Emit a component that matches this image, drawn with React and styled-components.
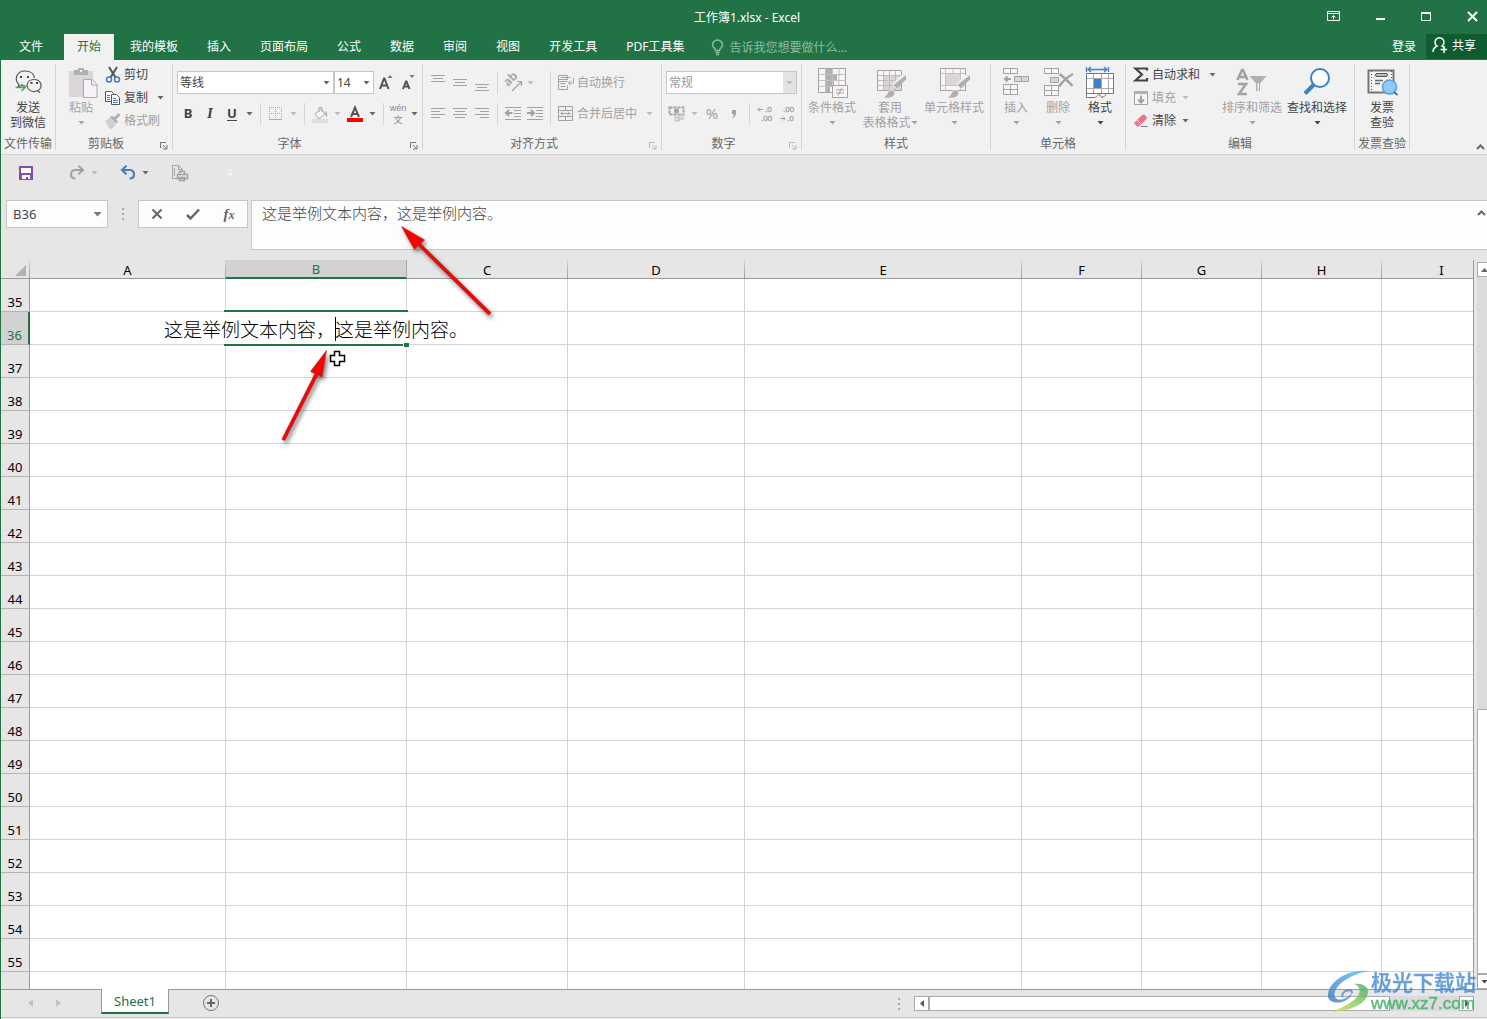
import React from 'react';
import styled, { createGlobalStyle, css } from 'styled-components'

const green = '#217346'
const uiFont = '"Noto Sans", "Noto Sans CJK SC", sans-serif'

const columns = [
    { name: 'A', width: 196 },
    { name: 'B', width: 181 },
    { name: 'C', width: 161 },
    { name: 'D', width: 177 },
    { name: 'E', width: 277 },
    { name: 'F', width: 120 },
    { name: 'G', width: 120 },
    { name: 'H', width: 120 },
    { name: 'I', width: 120 },
]
const rows = Array.from({ length: 21 }, (_, i) => 35 + i)
const tabs = ['我的模板', '插入', '页面布局', '公式', '数据', '审阅', '视图', '开发工具', 'PDF工具集']
const content = '这是举例文本内容，这是举例内容。'

const GlobalStyle = createGlobalStyle`
  * { box-sizing: border-box; }
  body {
    margin: 0;
    overflow: hidden;
    background: #e6e6e6;
    color: #444;
    font: 12px/15px ${uiFont};
  }
  button, input, select, textarea {
    margin: 0;
    padding: 0;
    border: 0;
    border-radius: 0;
    outline: 0;
    background: none;
    color: inherit;
    font: inherit;
  }
  svg { display: block; flex: none; overflow: visible; }
`;

/* ---------- icons ---------- */

const Down = () => (
    <svg width="7" height="4" viewBox="0 0 7 4"><path d="M0.5 0h6L3.5 3.5z" fill="currentColor" /></svg>
)

const Chevron = () => (
    <svg width="9" height="6" viewBox="0 0 9 6"><path d="M1 5l3.5-3.5L8 5" fill="none" stroke="#666" strokeWidth="2" /></svg>
)

const Icon = ({ size = 16, children }) => (
    <svg width={size} height={size} viewBox={`0 0 ${size} ${size}`} fill="none" stroke="currentColor" aria-hidden="true">
        {children}
    </svg>
)

const WechatIcon = () => (
    <Icon size={32}>
        <g stroke="#555" strokeWidth="1.2">
            <path d="M7 16.5C2.500 12.500 3.500 3 13 3c5.500 0 9 3 9.500 7M7 16.500l-1 2.500 3.500-1.500c1.500.6 3 .7 4.500.5" />
            <path d="M25.500 22.800c6-3 4-11.300-3.500-11.300-8.500 0-9.500 10.500-1 12 1.500.2 3 0 4.500-.7l2.500 1.700z" />
        </g>
        <path d="M8 8h2v2H8zM15 8h2v2h-2zM18.500 14h2v2h-2zM24 14h2v2h-2z" fill="#444" stroke="none" />
        <path d="M3.500 19.500h9.500M9.500 16l3.500 3.500-3.500 3.500" stroke="#4da868" strokeWidth="1.500" />
    </Icon>
)

const PasteIcon = () => (
    <Icon size={32}>
        <path d="M4 3h24v26H4z" fill="#d9d5d9" stroke="none" />
        <path d="M9 2h4V1q0-1 1-1h4q1 0 1 1v1h4v5H9z" fill="#b1afb1" stroke="none" />
        <path d="M15 2h2v2h-2z" fill="#eee" stroke="none" />
        <path d="M18.500 11.500h8.500l5 5v13H18.500z" fill="#f6f2f8" stroke="#aaa" />
        <path d="M26.500 11.500v5.500h5.500" stroke="#aaa" />
    </Icon>
)

const ScissorsIcon = () => (
    <Icon>
        <path d="M4 0l6.500 10.500M12 0L5.500 10.500" stroke="#555" strokeWidth="2" />
        <g stroke="#4a7ebb" strokeWidth="1.500"><circle cx="4" cy="12.500" r="2.500" /><circle cx="12" cy="12.500" r="2.500" /></g>
    </Icon>
)

const CopyIcon = () => (
    <Icon>
        <path d="M.5 1.500h6l2 2v8h-8z" fill="#fff" stroke="#555" />
        <path d="M6.500 4.500h5l3 3v7h-8z" fill="#fff" stroke="#555" />
        <path d="M2 5.500h3M2 7.500h3M2 9.500h3M8 8.500h3M8 10.500h5M8 12.500h5" stroke="#4a7ebb" />
    </Icon>
)

const PainterIcon = () => (
    <Icon>
        <path d="M0 8l5-3 6 6-4 5-3-1z" fill="#d2ced2" stroke="none" />
        <path d="M6 3.500l6 6M9 6.500L14.500 1" stroke="#b1afb1" strokeWidth="3" />
    </Icon>
)

const BorderIcon = () => (
    <Icon>
        <path d="M1 1.500h13M1 7.500h13M1.500 1v12M7.500 1v12M13.500 1v12" stroke="#aaa" strokeDasharray="1 1" />
        <path d="M1 13.500h13" stroke="#aaa" />
    </Icon>
)

const BucketIcon = () => (
    <Icon>
        <path d="M3 8l6-5 4 5-6 5z" fill="#f8f5f8" stroke="#aaa" />
        <path d="M7 6V1.500h3V6" stroke="#aaa" />
        <path d="M13 5q3 2 2 6-2-1-2-6z" fill="#aaa" stroke="none" />
        <path d="M0 13h16v4H0z" fill="#e2dde2" stroke="none" />
    </Icon>
)

const FontColorIcon = () => (
    <Icon>
        <path d="M4 11L8 1.500 12 11M5.500 8h5" stroke="#555" strokeWidth="2" />
        <path d="M0 12h16v4H0z" fill="#f00" stroke="none" />
    </Icon>
)

const ResizeFontIcon = ({ up }) => (
    <Icon>
        {up
            ? <path d="M3 14L7 3.500h.5L11.500 14M4.500 10.500h5.500" stroke="#555" strokeWidth="2" />
            : <path d="M4 14L7 6.500h.5L10.500 14M5 11.500h5" stroke="#555" strokeWidth="2" />}
        <path d={up ? 'M10.500 3h5L13 0z' : 'M10.500 0h5L13 3z'} fill="#4a7ebb" stroke="none" />
    </Icon>
)

const Lines = ({ lines }) => (
    <Icon>
        {lines.map(([x, y, w]) => <path key={y} d={`M${x} ${y}.5h${w}`} />)}
    </Icon>
)
const TopAlign = () => <Lines lines={[[1, 0, 14], [3, 3, 10], [1, 6, 14]]} />
const MiddleAlign = () => <Lines lines={[[1, 4, 14], [3, 7, 10], [1, 10, 14]]} />
const BottomAlign = () => <Lines lines={[[1, 9, 14], [3, 12, 10], [1, 15, 14]]} />
const LeftAlign = () => <Lines lines={[[1, 2, 14], [1, 5, 9], [1, 8, 14], [1, 11, 9]]} />
const CenterAlign = () => <Lines lines={[[1, 2, 14], [3, 5, 10], [1, 8, 14], [3, 11, 10]]} />
const RightAlign = () => <Lines lines={[[1, 2, 14], [6, 5, 9], [1, 8, 14], [6, 11, 9]]} />

const IndentIcon = ({ out }) => (
    <Icon>
        <path d="M0 1.500h16M9 4.500h7M9 7.500h7M9 10.500h7M0 13.500h16" />
        <path d={out ? 'M7.500 7H1M4 4L1 7l3 3' : 'M0 7h6.500M4 4l3 3-3 3'} strokeWidth="2" />
    </Icon>
)

const OrientIcon = () => (
    <Icon>
        <text x="3" y="12" fontSize="12" fontWeight="600" fill="currentColor" stroke="none" transform="rotate(-45 3 12)">ab</text>
        <path d="M7 16l9-9M12 6.500h4.500V11" strokeWidth="1.200" />
    </Icon>
)

const WrapIcon = () => (
    <Icon>
        <path d="M.5 .5h9v4h-9zM.5 6.500h9M.5 4.500v10h9v-4M2.500 2.500h10M2.500 8.500h5M2.500 11.500h5" />
        <path d="M15.500 3v5h-5M13 5.500L10.500 8l2.500 2.500" />
    </Icon>
)

const MergeIcon = () => (
    <Icon>
        <path d="M.5 .5h14v14H.5zM.5 4.500h14M.5 10.500h14M7.500 .5v4M7.500 10.500v4" />
        <path d="M3 7.500h9M5 5.500l-2 2 2 2M10 5.500l2 2-2 2" />
    </Icon>
)

const CurrencyIcon = () => (
    <Icon>
        <path d="M.5 1.500h14v7H.5z" strokeWidth="2" strokeDasharray="3 1" />
        <circle cx="7.500" cy="5" r="2.500" fill="currentColor" stroke="none" />
        <path d="M5 11.500h6M5 14.500h6M9 9.500h6M9 12.500h6" stroke="#ccc8cc" strokeWidth="2" />
    </Icon>
)

const DecimalIcon = ({ more }) => (
    <Icon>
        <g fontSize="8" fontFamily="Liberation Sans, sans-serif" fill="currentColor" stroke="currentColor" strokeWidth="0.300">
            <text x={more ? 8 : 4} y="6">{more ? '.0' : '.00'}</text>
            <text x={more ? 4 : 8} y="15">{more ? '.00' : '.0'}</text>
        </g>
        <path d={more ? 'M6 3.500H1M3 1.500l-2 2 2 2' : 'M1 12.500h5M4 10.500l2 2-2 2'} />
    </Icon>
)

const Brush = () => (
    <>
        <path d="M31.500 7.500L20 18.500" stroke="#f1f1f1" strokeWidth="6" />
        <path d="M32 7v4.500l-9 9-3.500-3.500z" fill="#b1afb1" stroke="none" />
        <path d="M9 29.500c4-1 4-6 7-7.500 3-1 6 2 4.500 5-2 3-7 4-11.500 2.500z" fill="#b1afb1" stroke="#f1f1f1" />
    </>
)

const ConditionalIcon = () => (
    <Icon size={32}>
        <path d="M2.500 .5h27v24h-27z" fill="#f8f4f8" />
        <path d="M10 1h6v5h5v6h-3v6h-4v6h-4z" fill="#b1afb1" stroke="none" />
        <path d="M2.500 6.500h27M2.500 12.500h27M2.500 18.500h27M9.500 .5v24M16.500 .5v24M23 .5v24" stroke="#c4c1c4" />
        <path d="M16.500 17.500h15v12h-15z" fill="#f8f4f8" />
        <path d="M20 22h8M20 25h8M26 19.500l-4 8" />
    </Icon>
)

const TableFormatIcon = () => (
    <Icon size={32}>
        <path d="M3.500 2.500h24v20h-24z" fill="#f8f4f8" />
        <path d="M10 8h17v14H10z" fill="#d9d5d9" stroke="none" />
        <path d="M3.500 7.500h24M3.500 12.500h24M3.500 17.500h24M9.500 2.500v20M15.500 2.500v20M21.500 2.500v20" stroke="#bebbbe" />
        <Brush />
    </Icon>
)

const CellStyleIcon = () => (
    <Icon size={32}>
        <path d="M2.500 .5h25v22h-25z" fill="#f8f4f8" />
        <path d="M2.500 5.500h25M2.500 17.500h25M7.500 .5v22M22.500 .5v22M15 .5v5" stroke="#c4c1c4" />
        <path d="M8 6h14v11H8z" fill="#d9d5d9" stroke="none" />
        <Brush />
    </Icon>
)

const InsertIcon = () => (
    <Icon size={32}>
        <path d="M3.500 .5h14v5h-14zM10.500 .5v5M3.500 16.500h14v10h-14zM10.500 16.500v10M3.500 21.500h14" fill="#f8f4f8" />
        <path d="M14.500 8.500h14v5h-14zM21.500 8.500v5" fill="#d9d5d9" />
        <path d="M11 11H5M7.500 8.500L5 11l2.500 2.500" strokeWidth="2" />
    </Icon>
)

const DeleteIcon = () => (
    <Icon size={32}>
        <path d="M2.500 .5h14v5h-14zM9.500 .5v5M2.500 17.500h14v10h-14zM9.500 17.500v10M2.500 22.500h14" fill="#f8f4f8" />
        <path d="M8.500 9.500h8v5h-8z" fill="#d9d5d9" />
        <path d="M17.500 6q7 5 13 12M31 6q-8 4-14 12.500" strokeWidth="2.500" />
    </Icon>
)

const FormatIcon = () => (
    <Icon size={32}>
        <path d="M2.500 -1v5M24.500 -1v5M4 1.500h19M7 -1L4 1.500 7 4M20 -1l3 2.500L20 4" stroke="#3f7fc4" strokeWidth="1.300" />
        <path d="M2.500 5.500h27v20h-7q-2 4-5 4 0-3-3-3-2 3-4 3h-8z" fill="#fff" stroke="#777" />
        <path d="M2.500 10.500h27M2.500 20.500h27M9.500 5.500v20M17.500 5.500v20M24.500 5.500v20" stroke="#aaa" />
        <path d="M10 11h7v9h-7z" fill="#3f7fc4" stroke="none" />
        <path d="M2.500 5.500h27v20h-27z" stroke="#777" />
    </Icon>
)

const SortIcon = () => (
    <Icon size={32}>
        <path d="M1.500 12L6 2h1l4.500 10M3 9h7M2 16h8L3 26h8" strokeWidth="2.500" />
        <path d="M13.500 8h17l-6.500 7.500V23h-4v-7.500z" fill="#b1afb1" stroke="none" />
        <path d="M21.500 15v7.500h1.500V15z" fill="#f1f1f1" stroke="none" />
    </Icon>
)

const FindIcon = () => (
    <Icon size={32}>
        <path d="M12.500 17L4 25.500" stroke="#3f7fc4" strokeWidth="4" />
        <circle cx="19" cy="10" r="9" fill="#fff" stroke="#3f7fc4" strokeWidth="2" />
    </Icon>
)

const InvoiceIcon = () => (
    <Icon size={32}>
        <path d="M2.500 2.500h25v22h-25z" fill="#f4f4f4" stroke="#777" strokeWidth="2" />
        <path d="M5.500 3v21M25.500 3v10" stroke="#555" strokeDasharray="1 2" />
        <rect x="9.500" y="5.500" width="12" height="3" rx="1.500" fill="#bbb" stroke="#555" />
        <path d="M9 12.500h8M9 15.500h5" stroke="#666" strokeWidth="1.500" />
        <circle cx="23.500" cy="19" r="7" fill="#92c8f6" stroke="#5b9fd4" strokeWidth="1.500" />
        <path d="M28 24l3.500 3" stroke="#2f83bd" strokeWidth="2" />
    </Icon>
)

const SumIcon = () => (
    <Icon><path d="M14 3.500V1.500H2.500L9 7.500l-6.500 6H14v-2.500" stroke="#444" strokeWidth="2.200" /></Icon>
)

const FillIcon = () => (
    <Icon>
        <path d="M1.500 1.500h13v13h-13z" fill="#f8f4f8" />
        <path d="M1 1h14v3H1z" fill="#b1afb1" stroke="none" />
        <path d="M8 5.500v7M5 9.500l3 3 3-3" strokeWidth="2" />
    </Icon>
)

const EraserIcon = () => (
    <Icon>
        <path d="M1 10l8-8q1.500-1 3 0l1.500 2q.8 1 0 2l-7.500 7.500H4z" fill="#e8788a" stroke="none" />
        <path d="M4 7l5 5" stroke="#f7e5e8" />
        <path d="M8 13.500h6.500" stroke="#777" />
    </Icon>
)

const Logo = () => (
    <svg width="44" height="44" viewBox="0 0 44 44">
        <defs>
            <linearGradient id="blue" x1="1" y1="0" x2="0" y2="1"><stop stopColor="#54c4f1" /><stop offset="1" stopColor="#3f74c2" /></linearGradient>
            <linearGradient id="leaf" x1="1" y1="0" x2="0" y2="1"><stop stopColor="#3fae68" /><stop offset="1" stopColor="#d2e34f" /></linearGradient>
        </defs>
        <path d="M42 2C22 0 3 11 1 25c-1 7 6 10 14 8 6-2 10-6 10-9-4 5-11 8-15 6-5-3-2-10 3-15C20 9 30 4 42 2z" fill="url(#blue)" />
        <path d="M25 24c0-3-4-4-8-1-2 2-2 4-1 5" fill="none" stroke="#4f86cc" strokeWidth="2" />
        <path d="M27 15c8-1 14 2 14 8 0 11-17 19-37 20 10-4 24-10 28-18 2-5-1-9-5-10z" fill="url(#leaf)" />
    </svg>
)

/* ---------- page ---------- */

const App = () => {
    return (
        <Window>
            <GlobalStyle />
            <TitleBar>
                <Title>工作簿1.xlsx - Excel</Title>
                <WindowButtons>
                    <button aria-label="功能区显示选项">
                        <Icon size={14}><path d="M.5 1.500h12v9H.5zM.5 3.500h12M6.500 9.500V5.500M4.500 7.500l2-2 2 2" /></Icon>
                    </button>
                    <button aria-label="最小化"><Icon size={14}><path d="M3 9h9" strokeWidth="2" /></Icon></button>
                    <button aria-label="最大化"><Icon size={14}><path d="M2.500 2.500h9v8h-9z" /><path d="M2 3h10" strokeWidth="2" /></Icon></button>
                    <button aria-label="关闭"><Icon size={14}><path d="M3 2l9 9M12 2l-9 9" strokeWidth="2" /></Icon></button>
                </WindowButtons>
            </TitleBar>

            <TabBar>
                <FileTab>文件</FileTab>
                <Tab $active>开始</Tab>
                {tabs.map(tab => <Tab key={tab}>{tab}</Tab>)}
                <TellMe>
                    <svg width="11" height="15" viewBox="0 0 11 15" fill="none" stroke="currentColor">
                        <path d="M3.500 10.500c0-2-3-3-3-5.500a4.700 4.700 0 0 1 10 0c0 2.500-3 3.500-3 5.500zM3.500 12.500h4M4 14.500h3" strokeWidth="1.500" />
                    </svg>
                    <input aria-label="操作说明搜索" placeholder="告诉我您想要做什么..." />
                </TellMe>
                <SignIn>登录</SignIn>
                <Share>
                    <Icon><path d="M1 15c0-4 2-5 4-6a4.500 4.500 0 1 1 5 0l1.500 1M8.500 12.500H15M12 9v7" strokeWidth="1.500" /></Icon>
                    共享
                </Share>
            </TabBar>

            <Ribbon>
                <Group $width={55}>
                    <GroupBody>
                        <BigButton $width={54}><WechatIcon /><span>发送</span><span>到微信</span></BigButton>
                    </GroupBody>
                    <GroupLabel>文件传输</GroupLabel>
                </Group>

                <Group $width={117}>
                    <GroupBody $indent={8}>
                        <BigButton $width={34} disabled><PasteIcon /><span>粘贴</span><span><Down /></span></BigButton>
                        <Stack>
                            <SmallButton><ScissorsIcon />剪切</SmallButton>
                            <SmallButton><CopyIcon />复制<Arrow $far><Down /></Arrow></SmallButton>
                            <SmallButton disabled><PainterIcon />格式刷</SmallButton>
                        </Stack>
                    </GroupBody>
                    <LaunchLabel>剪贴板</LaunchLabel>
                </Group>

                <Group $width={250}>
                    <Rows>
                        <ToolRow>
                            <Drop $width={157}>
                                <select aria-label="字体"><option>等线</option></select>
                                <DropArrow><Down /></DropArrow>
                            </Drop>
                            <Drop $width={40}>
                                <select aria-label="字号"><option>14</option></select>
                                <DropArrow><Down /></DropArrow>
                            </Drop>
                            <Tool aria-label="增大字号"><ResizeFontIcon up /></Tool>
                            <Tool aria-label="减小字号"><ResizeFontIcon /></Tool>
                        </ToolRow>
                        <ToolRow>
                            <Tool><b>B</b></Tool>
                            <Tool><Italic>I</Italic></Tool>
                            <Tool><Underlined>U</Underlined></Tool>
                            <Arrow><Down /></Arrow>
                            <Rule />
                            <Tool disabled aria-label="边框"><BorderIcon /></Tool>
                            <Arrow $off><Down /></Arrow>
                            <Rule />
                            <Tool disabled aria-label="填充颜色"><BucketIcon /></Tool>
                            <Arrow $off><Down /></Arrow>
                            <Tool aria-label="字体颜色"><FontColorIcon /></Tool>
                            <Arrow><Down /></Arrow>
                            <Rule />
                            <Phonetic><span>wén</span><span>文</span></Phonetic>
                            <Arrow><Down /></Arrow>
                        </ToolRow>
                    </Rows>
                    <LaunchLabel>字体</LaunchLabel>
                </Group>

                <Group $width={239}>
                    <GroupBody>
                        <Rows>
                            <ToolRow>
                                <Tool disabled aria-label="顶端对齐"><TopAlign /></Tool>
                                <Tool disabled aria-label="垂直居中"><MiddleAlign /></Tool>
                                <Tool disabled aria-label="底端对齐"><BottomAlign /></Tool>
                                <Rule />
                                <Tool disabled aria-label="方向"><OrientIcon /></Tool>
                                <Arrow $off><Down /></Arrow>
                            </ToolRow>
                            <ToolRow>
                                <Tool disabled aria-label="左对齐"><LeftAlign /></Tool>
                                <Tool disabled aria-label="居中"><CenterAlign /></Tool>
                                <Tool disabled aria-label="右对齐"><RightAlign /></Tool>
                                <Rule />
                                <Tool disabled aria-label="减少缩进量"><IndentIcon out /></Tool>
                                <Tool disabled aria-label="增加缩进量"><IndentIcon /></Tool>
                            </ToolRow>
                        </Rows>
                        <TallRule />
                        <WrapRows>
                            <ToolRow><SmallButton disabled><WrapIcon />自动换行</SmallButton></ToolRow>
                            <ToolRow>
                                <SmallButton disabled><MergeIcon />合并后居中<Arrow $off $far><Down /></Arrow></SmallButton>
                            </ToolRow>
                        </WrapRows>
                    </GroupBody>
                    <LaunchLabel $off>对齐方式</LaunchLabel>
                </Group>

                <Group $width={140}>
                    <Rows>
                        <ToolRow>
                            <Drop $width={131} $off>
                                <select aria-label="数字格式" disabled><option>常规</option></select>
                                <DropArrow $off><Down /></DropArrow>
                            </Drop>
                        </ToolRow>
                        <ToolRow>
                            <Tool disabled aria-label="会计数字格式"><CurrencyIcon /></Tool>
                            <Arrow $off><Down /></Arrow>
                            <Tool disabled $large>%</Tool>
                            <Tool disabled aria-label="千位分隔样式">
                                <Icon><path d="M6 4h4v3q0 4-4 5 2-2 1.500-4H6z" fill="currentColor" stroke="none" /></Icon>
                            </Tool>
                            <Rule />
                            <Tool disabled aria-label="增加小数位数"><DecimalIcon more /></Tool>
                            <Tool disabled aria-label="减少小数位数"><DecimalIcon /></Tool>
                        </ToolRow>
                    </Rows>
                    <LaunchLabel $off>数字</LaunchLabel>
                </Group>

                <Group $width={189}>
                    <GroupBody $indent={1}>
                        <BigButton $width={58} disabled><ConditionalIcon /><span>条件格式</span><span><Down /></span></BigButton>
                        <BigButton $width={58} disabled><TableFormatIcon /><span>套用</span><span>表格格式<Down /></span></BigButton>
                        <BigButton $width={70} disabled><CellStyleIcon /><span>单元格样式</span><span><Down /></span></BigButton>
                    </GroupBody>
                    <GroupLabel>样式</GroupLabel>
                </Group>

                <Group $width={135}>
                    <GroupBody $indent={4}>
                        <BigButton $width={42} disabled><InsertIcon /><span>插入</span><span><Down /></span></BigButton>
                        <BigButton $width={42} disabled><DeleteIcon /><span>删除</span><span><Down /></span></BigButton>
                        <BigButton $width={42}><FormatIcon /><span>格式</span><span><Down /></span></BigButton>
                    </GroupBody>
                    <GroupLabel>单元格</GroupLabel>
                </Group>

                <Group $width={229}>
                    <GroupBody>
                        <Stack>
                            <SmallButton><SumIcon />自动求和<Arrow $far><Down /></Arrow></SmallButton>
                            <SmallButton disabled><FillIcon />填充<Arrow $off><Down /></Arrow></SmallButton>
                            <SmallButton><EraserIcon />清除<Arrow><Down /></Arrow></SmallButton>
                        </Stack>
                        <BigButton $width={62} disabled><SortIcon /><span>排序和筛选</span><span><Down /></span></BigButton>
                        <BigButton $width={68}><FindIcon /><span>查找和选择</span><span><Down /></span></BigButton>
                    </GroupBody>
                    <GroupLabel>编辑</GroupLabel>
                </Group>

                <Group $width={55}>
                    <GroupBody>
                        <BigButton $width={54}><InvoiceIcon /><span>发票</span><span>查验</span></BigButton>
                    </GroupBody>
                    <GroupLabel>发票查验</GroupLabel>
                </Group>
                <CollapseRibbon aria-label="折叠功能区"><Chevron /></CollapseRibbon>
            </Ribbon>

            <QuickBar>
                <QuickSlot>
                    <Tool aria-label="保存">
                        <Icon>
                            <path d="M1 1h14v14H1z" fill="#8250a8" stroke="none" />
                            <path d="M3 3h10v5H3zM4 10h8v4h-2v-2H8v2H4z" fill="#fff" stroke="none" />
                        </Icon>
                    </Tool>
                </QuickSlot>
                <QuickSlot>
                    <Tool disabled aria-label="恢复">
                        <Icon><path d="M14 5H6q-4 .5-4 4.500t4.500 4M9.500 .8L14 5 9.500 9.200" strokeWidth="2" /></Icon>
                    </Tool>
                    <Arrow $off><Down /></Arrow>
                </QuickSlot>
                <QuickSlot>
                    <Tool aria-label="撤消">
                        <Icon><path d="M2 5h8q4 .5 4 4.500t-4.500 4M6.500 .8L2 5l4.500 4.200" stroke="#4a7ebb" strokeWidth="2.200" /></Icon>
                    </Tool>
                    <Arrow><Down /></Arrow>
                </QuickSlot>
                <QuickSlot>
                    <Tool disabled aria-label="打印预览">
                        <Icon>
                            <path d="M6 13.500H1.500v-13h6l4 4v2M7.500 .5v4h4M3.500 3v8" />
                            <path d="M6.500 9.500h10v4h-10zM8.500 9.500v-3h5v3M8.500 12.500h5v3h-5z" fill="#e6e6e6" strokeWidth="1.500" />
                        </Icon>
                    </Tool>
                </QuickSlot>
                <QuickSlot>
                    <More aria-label="自定义快速访问工具栏">
                        <Icon size={8}><path d="M1 1.500h6" /><path d="M1 4h6L4 7z" fill="currentColor" stroke="none" /></Icon>
                    </More>
                </QuickSlot>
            </QuickBar>

            <FormulaBar>
                <NameBox>
                    <input aria-label="名称框" defaultValue="B36" />
                    <button aria-label="名称列表">
                        <svg width="9" height="5" viewBox="0 0 9 5"><path d="M.5 0h8l-4 4.500z" fill="#777" /></svg>
                    </button>
                </NameBox>
                <Grip><i /><i /><i /></Grip>
                <FxButtons>
                    <button aria-label="取消"><Icon size={14}><path d="M2.500 2.500l9 9M11.500 2.500l-9 9" stroke="#666" strokeWidth="2" /></Icon></button>
                    <button aria-label="输入"><Icon size={14}><path d="M1 8l3.500 3.500L13 2.500" stroke="#666" strokeWidth="2.500" /></Icon></button>
                    <button aria-label="插入函数"><Fx>f<small>x</small></Fx></button>
                </FxButtons>
                <FormulaBox>
                    <textarea aria-label="编辑栏" spellCheck="false" defaultValue={content} />
                    <button aria-label="折叠编辑栏"><Chevron /></button>
                </FormulaBox>
            </FormulaBar>

            <SheetArea>
                <GridView>
                    <Grid>
                        <colgroup>
                            <col width="29" />
                            {columns.map(col => <col key={col.name} width={col.width} />)}
                        </colgroup>
                        <thead>
                            <tr>
                                <Corner>
                                    <svg width="11" height="11" viewBox="0 0 11 11"><path d="M11 0v11H0z" fill="#b2b2b2" /></svg>
                                </Corner>
                                {columns.map(col => <ColHead key={col.name} $active={col.name === 'B'}>{col.name}</ColHead>)}
                            </tr>
                        </thead>
                        <tbody>
                            {rows.map(row => (
                                <tr key={row}>
                                    <RowHead $active={row === 36}>{row}</RowHead>
                                    {columns.map(col => row === 36 && col.name === 'B' ? (
                                        <ActiveCell key={col.name}>
                                            <Selection />
                                            <Editor>
                                                <input aria-label="B36" defaultValue={content} />
                                                <Caret />
                                            </Editor>
                                            <FillHandle />
                                        </ActiveCell>
                                    ) : <Cell key={col.name} />)}
                                </tr>
                            ))}
                            <tr>
                                <RowHead />
                                {columns.map(col => <Cell key={col.name} />)}
                            </tr>
                        </tbody>
                    </Grid>
                </GridView>
                <VScroll>
                    <ScrollButton aria-label="向上滚动"><svg width="7" height="4" viewBox="0 0 7 4"><path d="M0 4h7L3.500 0z" fill="#666" /></svg></ScrollButton>
                    <VTrack><VThumb /></VTrack>
                    <ScrollButton aria-label="向下滚动"><Down /></ScrollButton>
                </VScroll>
            </SheetArea>

            <SheetBar>
                <SheetNav>
                    <button aria-label="上一个工作表"><svg width="5" height="8" viewBox="0 0 5 8"><path d="M5 0v8L0 4z" fill="#c3c3c3" /></svg></button>
                    <button aria-label="下一个工作表"><svg width="5" height="8" viewBox="0 0 5 8"><path d="M0 0v8l5-4z" fill="#c3c3c3" /></svg></button>
                </SheetNav>
                <SheetTab>Sheet1</SheetTab>
                <AddSheet aria-label="新工作表">
                    <Icon><circle cx="8" cy="8" r="7.500" stroke="#777" /><path d="M8 4v8M4 8h8" stroke="#666" strokeWidth="2" /></Icon>
                </AddSheet>
                <Grip><i /><i /><i /></Grip>
                <HScroll>
                    <ScrollButton aria-label="向左滚动"><svg width="4" height="7" viewBox="0 0 4 7"><path d="M4 0v7L0 3.500z" fill="#555" /></svg></ScrollButton>
                    <HTrack><HThumb /></HTrack>
                    <ScrollButton aria-label="向右滚动"><svg width="4" height="7" viewBox="0 0 4 7"><path d="M0 0v7l4-3.500z" fill="#555" /></svg></ScrollButton>
                </HScroll>
            </SheetBar>

            <Pointers width="500" height="450" viewBox="0 0 500 450" aria-hidden="true">
                <g fill="#f00" stroke="#9a2a20" strokeWidth="0.6">
                    <path d="M401.500 226.500L424.500 240 420.500 243.500 491 312.500 488.500 315 418 245.500 414.500 249.500z" />
                    <path d="M326.500 350.500L322 377 318 375 284.800 440.500 281.800 439.200 315 373.500 310.500 371.500z" />
                </g>
                <path d="M334.500 351.500h5v4h5v6h-5v4h-5v-4h-4v-6h4z" fill="#fff" stroke="#000" strokeWidth="1.500" />
            </Pointers>

            <Watermark>
                <Logo />
                <div><strong>极光下载站</strong><span>www.xz7.com</span></div>
            </Watermark>
        </Window>
    )
}

const Window = styled.div`
  position: relative;
  display: flex;
  flex-direction: column;
  height: 100vh;
  border-left: 1px solid ${green};
  overflow: hidden;
`;

const TitleBar = styled.header`
  display: grid;
  grid-template-columns: 1fr auto 1fr;
  align-items: center;
  flex: none;
  height: 34px;
  padding-left: 6px;
  background: ${green};
  color: #fff;
`;
const Title = styled.div`
  grid-column: 2;
`;
const WindowButtons = styled.div`
  display: flex;
  justify-content: flex-end;
  gap: 32px;
  padding-right: 8px;
`;

const TabBar = styled.nav`
  display: flex;
  gap: 3px;
  flex: none;
  height: 26px;
  background: ${green};
  color: #fff;
`;
const Tab = styled.button`
  padding: 0 13px 2px;
  white-space: nowrap;
  ${p => p.$active && css`
    background: #f1f1f1;
    color: ${green};
  `}
`;
const FileTab = styled(Tab)`
  width: 60px;
`;
const TellMe = styled.label`
  display: flex;
  align-items: center;
  flex: 1;
  gap: 6px;
  padding-left: 12px;
  color: #8fbc9f;
  input { width: 160px; }
  input::placeholder { color: #8fbc9f; opacity: 1; }
`;
const SignIn = styled.button`
  padding: 0 7px 2px;
`;
const Share = styled.button`
  display: flex;
  align-items: center;
  gap: 4px;
  height: 25px;
  padding: 0 11px 3px 6px;
  background: #0f5c30;
`;

const Ribbon = styled.div`
  display: flex;
  flex: none;
  padding: 4px 0;
  border-bottom: 1px solid #d2d2d2;
  background: #f1f1f1;
`;
const Group = styled.section`
  display: flex;
  flex-direction: column;
  flex: none;
  width: ${p => p.$width}px;
  height: 86px;
  border-right: 1px solid #d4d4d4;
`;
const GroupBody = styled.div`
  display: flex;
  height: 72px;
  padding-left: ${p => p.$indent || 0}px;
`;
const GroupLabel = styled.div`
  height: 14px;
  line-height: 16px;
  text-align: center;
  white-space: nowrap;
  color: #666;
`;
const LaunchText = styled(GroupLabel)`
  flex: 1;
`;
const LaunchRow = styled.div`
  display: flex;
  align-items: flex-end;
  color: ${p => p.$off ? '#bbb' : '#777'};
  button { width: 16px; padding-left: 4px; }
`;
const LaunchLabel = ({ children, $off }) => (
    <LaunchRow $off={$off}>
        <LaunchText>{children}</LaunchText>
        <button aria-label={`${children}设置`}>
            <Icon size={8}><path d="M.5 6V.5H6M3 3l3.500 3.500M7 3v4H3" /></Icon>
        </button>
    </LaunchRow>
)

const BigButton = styled.button`
  display: flex;
  flex-direction: column;
  align-items: center;
  flex: none;
  width: ${p => p.$width}px;
  height: 66px;
  padding-top: 4px;
  white-space: nowrap;
  color: #444;
  span {
    display: flex;
    align-items: center;
    justify-content: center;
    height: 15px;
  }
  /* the arrow that follows a label hangs outside the centred text */
  span svg { margin: 0 -10px 0 3px; }
  span svg:only-child { margin: 0; }
  &:disabled { color: #a3a1a3; }
`;
const Stack = styled.div`
  display: flex;
  flex-direction: column;
  flex: none;
  gap: 2px;
  width: 95px;
  padding-left: 7px;
`;
const SmallButton = styled.button`
  display: flex;
  align-items: center;
  gap: 3px;
  height: 21px;
  white-space: nowrap;
  color: #444;
  &:disabled { color: #a3a1a3; }
`;
const Arrow = styled.span`
  display: flex;
  align-items: center;
  justify-content: center;
  width: ${p => p.$far ? 19 : 13}px;
  color: ${p => p.$off ? '#bbb' : '#666'};
`;
const Rows = styled.div`
  display: flex;
  flex-direction: column;
  gap: 8px;
  height: 72px;
  padding: 7px 0 0 4px;
`;
const WrapRows = styled(Rows)`
  padding-left: 3px;
`;
const ToolRow = styled.div`
  display: flex;
  align-items: center;
  height: 23px;
`;
const Tool = styled.button`
  display: flex;
  align-items: center;
  justify-content: center;
  width: 22px;
  height: 22px;
  font-size: ${p => p.$large ? 15 : 13}px;
  color: #444;
  &:disabled { color: #a3a1a3; }
`;
const Italic = styled.i`
  font-family: "Liberation Serif", serif;
  font-size: 15px;
  font-weight: bold;
`;
const Underlined = styled.span`
  border-bottom: 1px solid #444;
  line-height: 13px;
  font-weight: bold;
`;
const Phonetic = styled.button`
  display: flex;
  flex-direction: column;
  align-items: center;
  width: 20px;
  font-family: "Liberation Sans", "Noto Sans CJK SC", sans-serif;
  font-size: 9px;
  line-height: 12px;
  color: #888;
`;
const Rule = styled.span`
  width: 1px;
  height: 22px;
  margin: 0 4px;
  background: #d4d4d4;
`;
const TallRule = styled(Rule)`
  height: 54px;
  margin-top: 7px;
`;
const Drop = styled.div`
  position: relative;
  width: ${p => p.$width}px;
  height: 23px;
  border: 1px solid #c6c6c6;
  background: #fff;
  select {
    width: 100%;
    height: 100%;
    padding-left: 2px;
    appearance: none;
    opacity: 1;
    color: ${p => p.$off ? '#999' : '#444'};
  }
`;
const DropArrow = styled.span`
  position: absolute;
  top: 0;
  right: 0;
  bottom: 0;
  display: flex;
  align-items: center;
  justify-content: center;
  width: 13px;
  pointer-events: none;
  color: ${p => p.$off ? '#bbb' : '#666'};
  background: ${p => p.$off ? '#e3e3e3' : 'none'};
`;
const CollapseRibbon = styled.button`
  align-self: flex-end;
  margin-left: auto;
  padding-right: 2px;
`;

const QuickBar = styled.div`
  display: flex;
  align-items: center;
  flex: none;
  height: 35px;
  padding-left: 14px;
`;
const QuickSlot = styled.div`
  display: flex;
  align-items: center;
  width: 51px;
`;
const More = styled(Tool)`
  color: #f5f5f5;
`;

const FormulaBar = styled.div`
  display: flex;
  flex: none;
  padding: 10px 0 10px 5px;
`;
const NameBox = styled.div`
  display: flex;
  width: 102px;
  height: 28px;
  border: 1px solid #c6c6c6;
  background: #fdfdfd;
  font-size: 13px;
  input { flex: 1; min-width: 0; padding-left: 6px; }
  button { width: 18px; padding-left: 4px; }
`;
const Grip = styled.span`
  display: flex;
  flex-direction: column;
  align-items: center;
  justify-content: center;
  gap: 3px;
  width: 30px;
  height: 28px;
  i { width: 2px; height: 2px; background: #aaa; }
`;
const FxButtons = styled.div`
  display: flex;
  width: 110px;
  height: 28px;
  margin-right: 3px;
  border: 1px solid #c6c6c6;
  background: #fdfdfd;
  button {
    display: flex;
    align-items: center;
    justify-content: center;
    flex: 1;
  }
`;
const Fx = styled.i`
  font: italic bold 15px "Liberation Serif", serif;
  color: #666;
  small { font-size: 12px; }
`;
const FormulaBox = styled.div`
  display: flex;
  align-items: flex-start;
  flex: 1;
  height: 50px;
  border: 1px solid #c6c6c6;
  border-right: 0;
  background: #fdfdfd;
  textarea {
    flex: 1;
    height: 100%;
    padding: 2px 10px;
    resize: none;
    font-size: 15px;
    line-height: 20px;
    font-weight: 300;
  }
  button { padding: 9px 1px 0 0; }
`;

const SheetArea = styled.main`
  display: flex;
  flex: 1;
  min-height: 0;
`;
const GridView = styled.div`
  flex: 1;
  min-width: 0;
  overflow: hidden;
  border-right: 1px solid #999;
  background: #fff;
`;
const Grid = styled.table`
  width: 100%;
  table-layout: fixed;
  border-collapse: separate;
  border-spacing: 0;
  font-size: 13px;
  color: #000;
  th { font-weight: normal; }
`;
const ColHead = styled.th`
  height: 19px;
  padding: 2px 0 0;
  border-right: 1px solid;
  border-image: linear-gradient(#d8d8d8, #999) 1;
  border-bottom: 1px solid #999;
  background: #e6e6e6;
  line-height: 16px;
  ${p => p.$active && css`
    border-image: none;
    border-right-color: #aaa;
    border-bottom: 2px solid ${green};
    background: #d2d2d2;
    color: ${green};
    line-height: 15px;
  `}
`;
const Corner = styled(ColHead)`
  svg { margin-left: 14px; }
`;
const RowHead = styled.th`
  height: 33px;
  padding: 0;
  border-right: 1px solid #999;
  border-bottom: 1px solid #b5b5b5;
  background: #e6e6e6;
  line-height: 17px;
  vertical-align: bottom;
  ${p => p.$active && css`
    border-right: 2px solid ${green};
    background: #d2d2d2;
    color: ${green};
  `}
`;
const Cell = styled.td`
  height: 33px;
  padding: 0;
  border-right: 1px solid #d4d4d4;
  border-bottom: 1px solid #d4d4d4;
`;
const ActiveCell = styled(Cell)`
  position: relative;
`;
const Editor = styled.div`
  position: absolute;
  top: 0;
  left: 50%;
  width: 308px;
  height: 32px;
  margin-left: -154px;
  background: #fff;
  input {
    width: 100%;
    height: 100%;
    padding: 2px 2px 0;
    font-size: 19px;
    font-weight: 300;
  }
`;
const Caret = styled.span`
  position: absolute;
  top: 5px;
  left: 173px;
  width: 1px;
  height: 24px;
  background: #000;
`;
const Selection = styled.div`
  position: absolute;
  inset: -2px;
  border: solid ${green};
  border-width: 2px 0;
`;
const FillHandle = styled.span`
  position: absolute;
  right: -3px;
  bottom: -3px;
  width: 6px;
  height: 4px;
  border-left: 1px solid #fff;
  background: ${green};
`;

const VScroll = styled.div`
  display: flex;
  flex-direction: column;
  width: 13px;
  padding: 2px 0 0 3px;
  overflow: hidden;
`;
const ScrollButton = styled.button`
  display: flex;
  align-items: center;
  justify-content: center;
  flex: none;
  width: 15px;
  height: 15px;
  border: 1px solid #ababab;
  background: #fff;
`;
const VTrack = styled.div`
  display: flex;
  flex-direction: column;
  justify-content: flex-end;
  flex: 1;
  width: 15px;
  background: #dbdbdb;
`;
const VThumb = styled.div`
  height: 38%;
  border: 1px solid #ababab;
  background: #fff;
`;

const SheetBar = styled.footer`
  display: flex;
  flex: none;
  height: 30px;
  border-top: 1px solid #999;
  border-bottom: 1px solid #f1f1f1;
  box-shadow: inset 0 -1px #c3c3c3;
`;
const SheetNav = styled.div`
  display: flex;
  width: 100px;
  padding: 0 0 3px 15px;
  button {
    display: flex;
    align-items: center;
    justify-content: center;
    width: 28px;
  }
`;
const SheetTab = styled.button`
  height: 25px;
  margin-top: -1px;
  padding: 1px 12px 0;
  border: solid #999;
  border-width: 0 1px;
  border-bottom: 2px solid ${green};
  background: #fff;
  font-size: 13px;
  color: ${green};
`;
const AddSheet = styled.button`
  display: flex;
  align-items: center;
  height: 26px;
  margin: 0 auto 0 34px;
`;
const HScroll = styled.div`
  display: flex;
  flex: 0 1 560px;
  height: 15px;
  margin: 6px 13px 0 0;
`;
const HTrack = styled.div`
  flex: 1;
  background: #dbdbdb;
`;
const HThumb = styled.div`
  width: 87%;
  height: 15px;
  border: 1px solid #ababab;
  background: #fff;
`;

const Pointers = styled.svg`
  position: absolute;
  top: 0;
  left: -1px;
  pointer-events: none;
  g { filter: drop-shadow(2px 3px 2px rgba(0, 0, 0, 0.5)); }
`;
const Watermark = styled.div`
  position: absolute;
  right: 9px;
  bottom: 6px;
  display: flex;
  align-items: center;
  opacity: 0.8;
  pointer-events: none;
  div { display: flex; flex-direction: column; width: 107px; }
  strong {
    font-size: 21px;
    line-height: 24px;
    font-weight: 500;
    color: #4689d2;
    -webkit-text-stroke: 0.5px #4689d2;
  }
  span {
    font: 17px/19px "Liberation Sans", sans-serif;
    color: #35b060;
    -webkit-text-stroke: 0.5px #35b060;
  }
`;

export default App;
